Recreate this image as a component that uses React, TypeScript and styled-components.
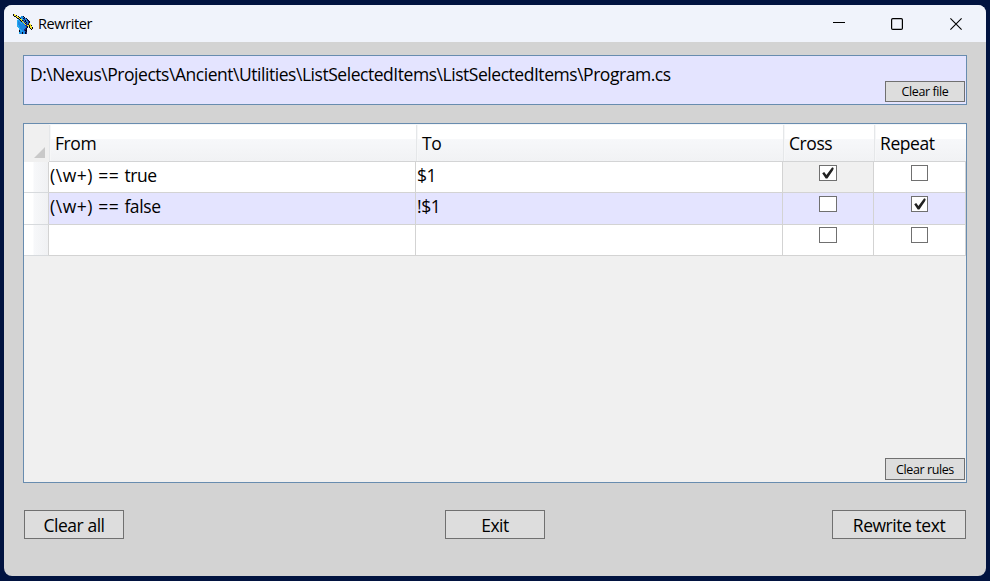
import React, { useState } from 'react';
import styled, { createGlobalStyle } from 'styled-components';

const GlobalStyle = createGlobalStyle`
  * { box-sizing: border-box; }
  html, body { margin: 0; padding: 0; }
  body { background: #011340; overflow: hidden; font-family: "Open Sans", "Noto Sans", sans-serif; font-weight: 400; color: #000; }
  button { font-family: inherit; font-weight: inherit; color: inherit; }
`;

const Desktop = styled.div`
  width: 990px;
  height: 581px;
  padding: 5px 4px;
  background: #011340;
`;

const Window = styled.div`
  width: 982px;
  height: 571px;
  border-radius: 8px;
  overflow: hidden;
  background: #d3d3d3;
  display: flex;
  flex-direction: column;
`;

const TitleBar = styled.header`
  height: 37px;
  flex: none;
  background: #f0f3fb;
  display: flex;
  align-items: center;
  padding: 0 1px 0 9px;
`;

const Title = styled.span`
  flex: 1;
  margin-left: 5px;
  font-size: 14.5px;
  line-height: 20px;
  letter-spacing: -0.4px;
`;

const CaptionButton = styled.button`
  width: 58.5px;
  height: 37px;
  padding: 0;
  border: 0;
  background: none;
  display: flex;
  align-items: center;
  justify-content: center;
`;

const Content = styled.main`
  flex: 1;
  padding: 13px 19px 0;
  display: flex;
  flex-direction: column;
`;

const FilePanel = styled.section`
  height: 50px;
  flex: none;
  background: #e4e4ff;
  border: 1px solid #688caf;
  padding: 1px 1px 2px;
  display: flex;
  align-items: flex-end;
  justify-content: space-between;
`;

const FilePath = styled.div`
  align-self: flex-start;
  padding: 5px 0 0 5px;
  font-size: 17.5px;
  line-height: 24px;
  letter-spacing: -0.46px;
  white-space: nowrap;
`;

const Button = styled.button<{ $width: number; $height?: number; $small?: boolean }>`
  flex: none;
  width: ${p => p.$width}px;
  height: ${p => p.$height ?? 29}px;
  padding: ${p => (p.$small ? '1px 0 0' : '1px 0 0')};
  border: 1px solid #707070;
  background: #ddd;
  font-size: ${p => (p.$small ? 12.5 : 17.5)}px;
  line-height: ${p => (p.$small ? 18 : 26)}px;
  letter-spacing: ${p => (p.$small ? -0.4 : -0.45)}px;
  white-space: nowrap;
`;

const RulesPanel = styled.section`
  height: 360px;
  flex: none;
  margin-top: 18px;
  border: 1px solid #688caf;
  background: #f0f0f0;
  display: flex;
  flex-direction: column;
  justify-content: space-between;
`;

const RulesFooter = styled.div`
  display: flex;
  justify-content: flex-end;
  padding: 0 1px 2px;
`;

const Row = styled.div<{ $height: number; $tint?: boolean }>`
  display: grid;
  grid-template-columns: 25px 367px 367px 91px 92px;
  height: ${p => p.$height}px;
  background: ${p => (p.$tint ? '#e4e4ff' : '#fff')};
`;

const HeaderCell = styled.div`
  padding: 6px 0 0 6px;
  font-size: 17.5px;
  line-height: 24px;
  letter-spacing: -0.42px;
  border-top: 1px solid #f4f6f8;
  border-bottom: 1px solid #d3d4d5;
  background:
    linear-gradient(90deg, #e5e7e9 1px, #f6f7f8 1px, #f6f7f8 2px, transparent 2px),
    linear-gradient(#fff 0 14px, #f7f8fa 14px, #f1f2f4 100%);
`;

const Corner = styled.div`
  background: #f0f0f0;
  display: flex;
  align-items: flex-end;
  justify-content: flex-end;
  padding: 0 4px 4px 0;
`;

const RowHeader = styled.div`
  border-right: 1px solid #d3d3d3;
  border-bottom: 1px solid #d7dadd;
  background: linear-gradient(90deg, #fff 0 9px, #f7f8fa 10px, #f0f1f3 100%);
`;

const Cell = styled.div<{ $current?: boolean; $check?: number }>`
  display: flex;
  justify-content: ${p => (p.$check ? 'center' : 'flex-start')};
  align-items: flex-start;
  padding: ${p => (p.$check ? `${p.$check}px 0 0` : '1px 0 0 1px')};
  border-right: 1px solid #d3d3d3;
  border-bottom: 1px solid #d3d3d3;
  background: ${p => (p.$current ? '#f0f0f0' : 'transparent')};
  font-size: 17.5px;
  line-height: 24px;
  letter-spacing: -0.4px;
  white-space: pre;
`;

const Pattern = styled.span`
  letter-spacing: 0.55px;
`;

const CheckBox = styled.button<{ $width: number }>`
  width: ${p => p.$width}px;
  height: 16px;
  padding: 0;
  border: 1px solid #707070;
  background: #fff;
  display: flex;
  align-items: center;
  justify-content: center;
`;

const Actions = styled.footer`
  display: grid;
  grid-template-columns: 1fr auto 1fr;
  padding: 27px 1px 0;

  > :last-child { justify-self: end; }
`;

const PALETTE: Record<string, string> = {
  k: '#05071c', y: '#f5e52a', b: '#1b86e0', n: '#202c80', c: '#27aaf0',
};

const HAND = [
  'ky..................',
  'kyyk................',
  '.kkyyk..bbk.........',
  '...kyykcbbbk........',
  '....kkykcbknbk......',
  '.....ckyycbnbbk.....',
  '....ccbkyknbkbnk....',
  '....cbcbkybnkbbnk...',
  '....cbbcbbynbkbnk...',
  '....cbbbcbbyknbny...',
  '....cbbbbbbbynnkyy..',
  '....ccbbbbbbnnyykyk.',
  '....ccbbbbbbbnkykyy.',
  '.....ccbbbbbbnk.kyyk',
  '......cbbbbbnk...kyk',
  '......ccbbbnnk....k.',
  '......kccbbnkk......',
  '......kbcbbbnk......',
  '......cbbkbbkn......',
  '......cbbkbbkn......',
];

function HandIcon() {
  return (
    <svg width="20" height="20" viewBox="0 0 20 20" shapeRendering="crispEdges">
      {HAND.flatMap((line, y) =>
        [...line].map((ch, x) =>
          PALETTE[ch] ? <rect key={`${x}-${y}`} x={x} y={y} width="1" height="1" fill={PALETTE[ch]} /> : null
        )
      )}
    </svg>
  );
}

function CheckMark() {
  return (
    <svg width="14" height="14" viewBox="0 0 14 14">
      <path d="M1.2 7.2 L3.2 5.9 L5.4 8.9 L11.2 1.2 L12.7 2 L12.2 4 L6.4 12.4 L4.7 12.4 Z" fill="#212121" />
    </svg>
  );
}

type Rule = { pattern: string; value: string; to: string; cross: boolean; repeat: boolean; height: number };

const INITIAL: Rule[] = [
  { pattern: '(\\w+) == ', value: 'true', to: '$1', cross: true, repeat: false, height: 31 },
  { pattern: '(\\w+) == ', value: 'false', to: '!$1', cross: false, repeat: true, height: 32 },
  { pattern: '', value: '', to: '', cross: false, repeat: false, height: 31 },
];

export default function App() {
  const [rules, setRules] = useState(INITIAL);
  const toggle = (index: number, key: 'cross' | 'repeat') =>
    setRules(rs => rs.map((r, i) => (i === index ? { ...r, [key]: !r[key] } : r)));

  return (
    <>
      <GlobalStyle />
      <Desktop>
        <Window>
          <TitleBar>
            <HandIcon />
            <Title>Rewriter</Title>
            <CaptionButton aria-label="Minimize">
              <svg width="12" height="12"><path d="M0 4.5H12" stroke="#000" /></svg>
            </CaptionButton>
            <CaptionButton aria-label="Maximize">
              <svg width="12" height="12"><rect x=".6" y=".6" width="10.8" height="10.8" rx="1.2" fill="none" stroke="#000" strokeWidth="1.2" /></svg>
            </CaptionButton>
            <CaptionButton aria-label="Close">
              <svg width="12" height="12"><path d="M.4 .4L11.6 11.6M11.6 .4L.4 11.6" stroke="#000" strokeWidth="1.1" /></svg>
            </CaptionButton>
          </TitleBar>
          <Content>
            <FilePanel>
              <FilePath>D:\Nexus\Projects\Ancient\Utilities\ListSelectedItems\ListSelectedItems\Program.cs</FilePath>
              <Button $width={80} $height={21} $small>Clear file</Button>
            </FilePanel>
            <RulesPanel>
              <div>
                <Row $height={38}>
                  <Corner>
                    <svg width="11" height="11"><path d="M11 0V11H0Z" fill="#c9c9c9" /></svg>
                  </Corner>
                  <HeaderCell>From</HeaderCell>
                  <HeaderCell>To</HeaderCell>
                  <HeaderCell>Cross</HeaderCell>
                  <HeaderCell>Repeat</HeaderCell>
                </Row>
                {rules.map((rule, i) => (
                  <Row key={i} $height={rule.height} $tint={i === 1}>
                    <RowHeader />
                    <Cell><Pattern>{rule.pattern}</Pattern>{rule.value}</Cell>
                    <Cell>{rule.to}</Cell>
                    <Cell $check={i === 2 ? 2 : 3} $current={i === 0}>
                      <CheckBox $width={18} onClick={() => toggle(i, 'cross')}>{rule.cross && <CheckMark />}</CheckBox>
                    </Cell>
                    <Cell $check={i === 2 ? 2 : 3}>
                      <CheckBox $width={17} onClick={() => toggle(i, 'repeat')}>{rule.repeat && <CheckMark />}</CheckBox>
                    </Cell>
                  </Row>
                ))}
              </div>
              <RulesFooter>
                <Button $width={80} $height={22} $small onClick={() => setRules([])}>Clear rules</Button>
              </RulesFooter>
            </RulesPanel>
            <Actions>
              <Button $width={100}>Clear all</Button>
              <Button $width={100}>Exit</Button>
              <Button $width={134}>Rewrite text</Button>
            </Actions>
          </Content>
        </Window>
      </Desktop>
    </>
  );
}
